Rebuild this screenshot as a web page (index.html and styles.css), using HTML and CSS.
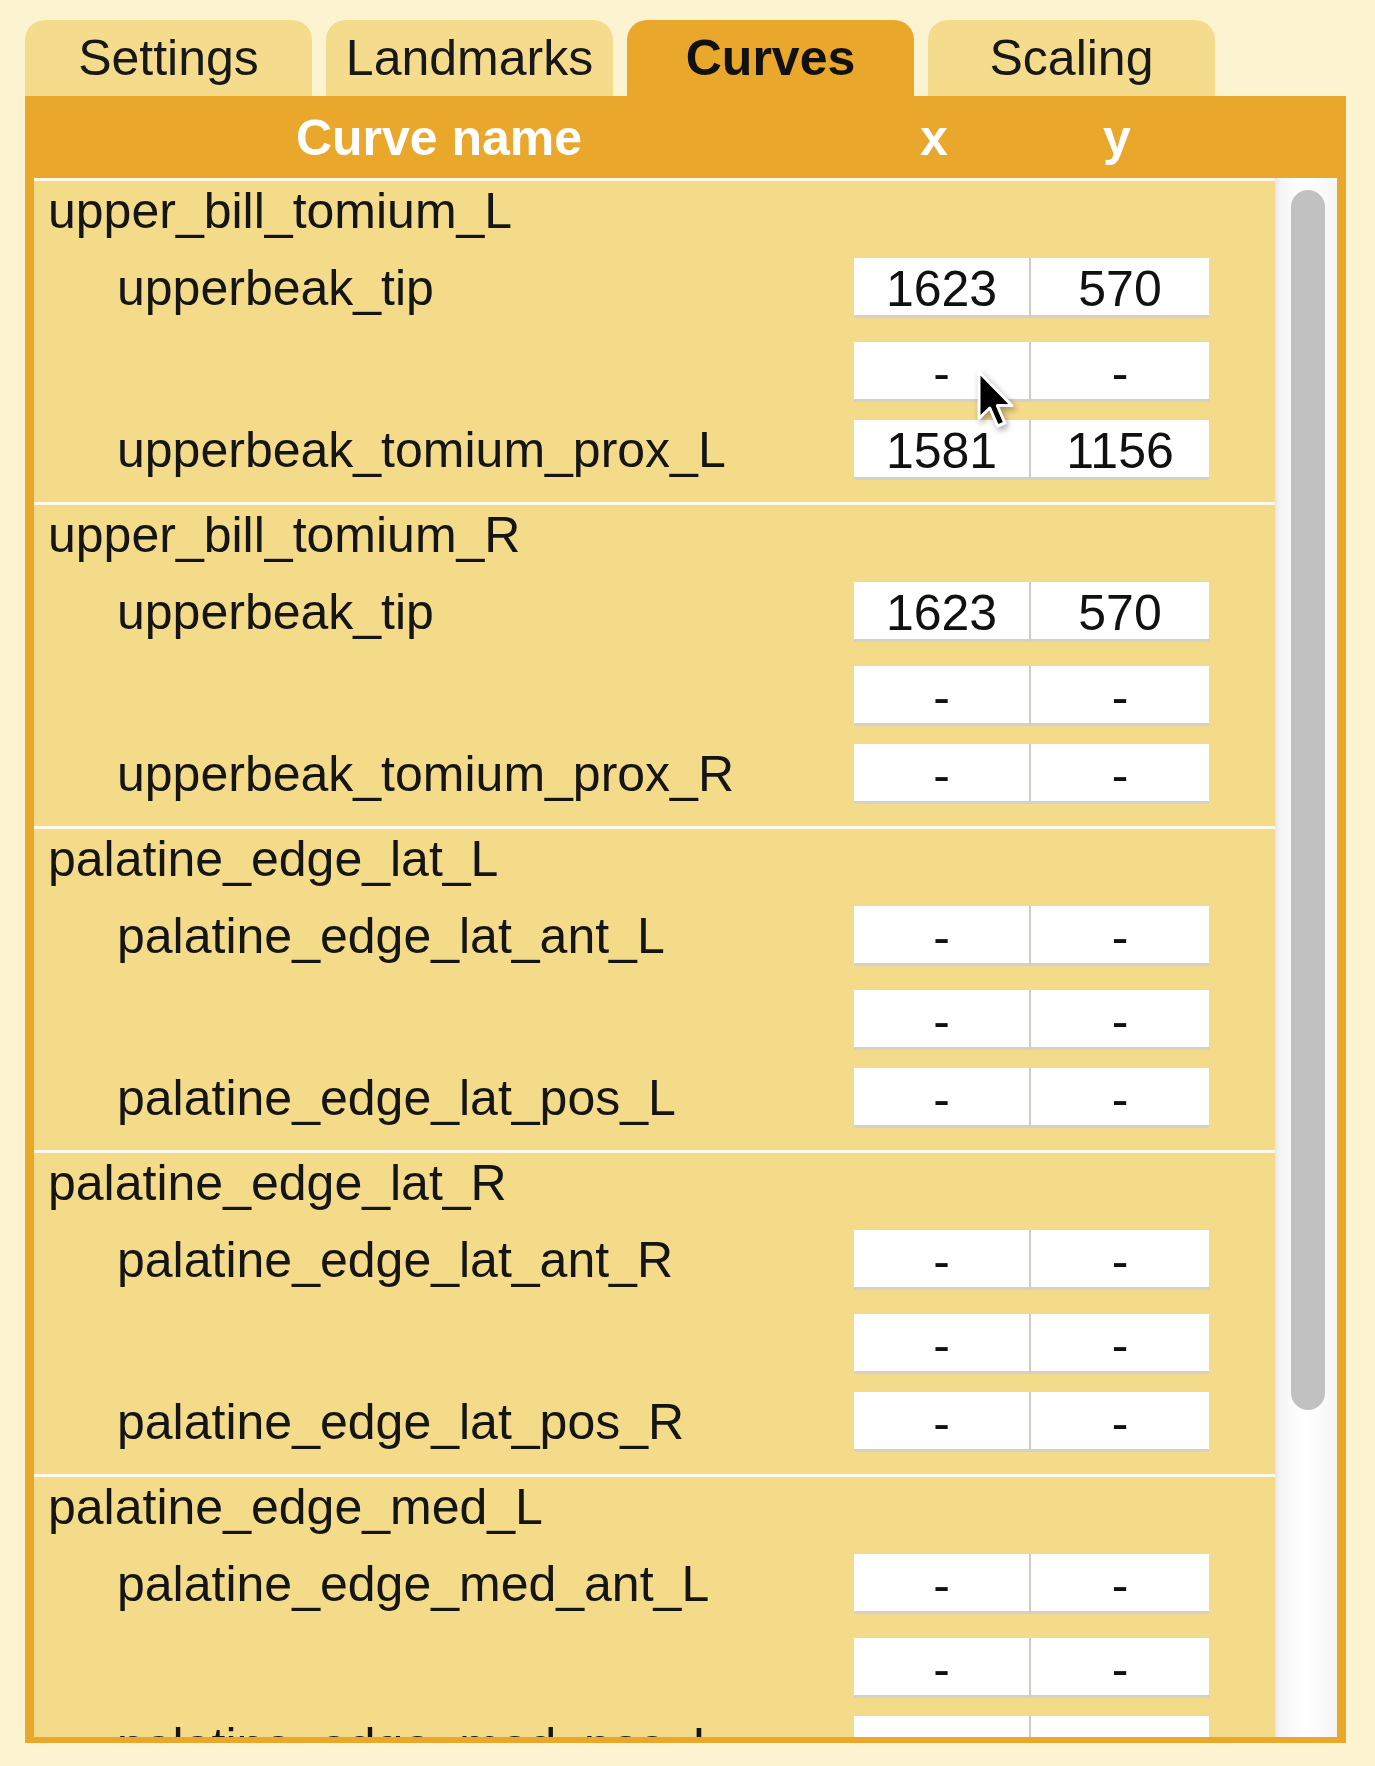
FILE: index.html
```html
<!DOCTYPE html>
<html>
<head>
<meta charset="utf-8">
<link rel="stylesheet" href="styles.css">
</head>
<body>
<div class="app">
  <nav class="tabs">
    <div class="tab">Settings</div>
    <div class="tab">Landmarks</div>
    <div class="tab active">Curves</div>
    <div class="tab">Scaling</div>
  </nav>
  <section class="panel">
    <div class="panel-head">
      <span>Curve name</span><span>x</span><span>y</span>
    </div>
    <div class="panel-body">
      <div class="list">
        <div class="group">
          <div class="group-title">upper_bill_tomium_L</div>
          <div class="row first"><span class="label">upperbeak_tip</span><span class="val x">1623</span><span class="val">570</span></div>
          <div class="row mid"><span class="label"></span><span class="val x">-</span><span class="val">-</span></div>
          <div class="row last"><span class="label">upperbeak_tomium_prox_L</span><span class="val x">1581</span><span class="val">1156</span></div>
        </div>
        <div class="group">
          <div class="group-title">upper_bill_tomium_R</div>
          <div class="row first"><span class="label">upperbeak_tip</span><span class="val x">1623</span><span class="val">570</span></div>
          <div class="row mid"><span class="label"></span><span class="val x">-</span><span class="val">-</span></div>
          <div class="row last"><span class="label">upperbeak_tomium_prox_R</span><span class="val x">-</span><span class="val">-</span></div>
        </div>
        <div class="group">
          <div class="group-title">palatine_edge_lat_L</div>
          <div class="row first"><span class="label">palatine_edge_lat_ant_L</span><span class="val x">-</span><span class="val">-</span></div>
          <div class="row mid"><span class="label"></span><span class="val x">-</span><span class="val">-</span></div>
          <div class="row last"><span class="label">palatine_edge_lat_pos_L</span><span class="val x">-</span><span class="val">-</span></div>
        </div>
        <div class="group">
          <div class="group-title">palatine_edge_lat_R</div>
          <div class="row first"><span class="label">palatine_edge_lat_ant_R</span><span class="val x">-</span><span class="val">-</span></div>
          <div class="row mid"><span class="label"></span><span class="val x">-</span><span class="val">-</span></div>
          <div class="row last"><span class="label">palatine_edge_lat_pos_R</span><span class="val x">-</span><span class="val">-</span></div>
        </div>
        <div class="group">
          <div class="group-title">palatine_edge_med_L</div>
          <div class="row first"><span class="label">palatine_edge_med_ant_L</span><span class="val x">-</span><span class="val">-</span></div>
          <div class="row mid"><span class="label"></span><span class="val x">-</span><span class="val">-</span></div>
          <div class="row last"><span class="label">palatine_edge_med_pos_L</span><span class="val x">-</span><span class="val">-</span></div>
        </div>
        <div class="group">
          <div class="group-title">palatine_edge_med_R</div>
          <div class="row first"><span class="label">palatine_edge_med_ant_R</span><span class="val x">-</span><span class="val">-</span></div>
          <div class="row mid"><span class="label"></span><span class="val x">-</span><span class="val">-</span></div>
          <div class="row last"><span class="label">palatine_edge_med_pos_R</span><span class="val x">-</span><span class="val">-</span></div>
        </div>
      </div>
      <div class="scrollbar"><div class="thumb"></div></div>
    </div>
  </section>
  <svg class="cursor" viewBox="0 0 13 21" width="39" height="63">
    <path d="M1 1 L1 16.5 L4.6 13 L7.2 19 L9.6 18 L7.1 12.2 L12 12.2 Z" fill="#000" stroke="#fff" stroke-width="1" stroke-linejoin="round"/>
  </svg>
</div>
</body>
</html>
```

FILE: styles.css
```css
html, body {
  margin: 0;
  padding: 0;
}

body {
  background: #FCF3D1;
  font-family: "Liberation Sans", Arial, sans-serif;
  font-size: 50px;
  color: #151515;
  height: 1766px;
  overflow: hidden;
}

.app {
  position: relative;
  padding: 20px 0 0 25px;
  width: 1321px;
}

.tabs {
  display: flex;
  gap: 14px;
  height: 76px;
}

.tab {
  width: 287px;
  height: 76px;
  background: #F4DC8C;
  border-radius: 20px 20px 0 0;
  text-align: center;
  line-height: 76px;
  color: #181818;
}

.tab.active {
  background: #E9A72C;
  font-weight: bold;
  color: #111;
}

.panel {
  width: 1321px;
  box-sizing: border-box;
  background: #E9A72C;
  padding: 0 9px 6px 9px;
}

.panel-head {
  display: grid;
  grid-template-columns: 810px 180px 186px;
  height: 82px;
  box-sizing: border-box;
  padding-top: 3px;
  line-height: 79px;
  color: #fff;
  font-weight: bold;
  text-align: center;
}

.panel-body {
  display: flex;
  height: 1559px;
  background: #F3DB8A;
}

.list {
  flex: 1;
  overflow: hidden;
}

.group {
  border-top: 3px solid #FFF9EC;
  padding-bottom: 22px;
}

.group-title {
  padding-left: 14px;
  height: 60px;
  line-height: 60px;
  white-space: nowrap;
}

.row {
  display: grid;
  grid-template-columns: 820px 177px 178px;
  height: 60px;
}

.row.first { margin-top: 17px; }
.row.mid { margin-top: 24px; }
.row.last { margin-top: 18px; }

.label {
  padding-left: 83px;
  line-height: 60px;
  white-space: nowrap;
}

.val {
  background: #fff;
  box-sizing: border-box;
  height: 60px;
  padding-top: 5px;
  line-height: 52px;
  border-bottom: 3px solid #D4D1C9;
  text-align: center;
  color: #111;
}

.val.x {
  border-right: 2px solid #CFCCC4;
}

.scrollbar {
  width: 62px;
  box-sizing: border-box;
  padding: 12px 12px 0 16px;
  background: linear-gradient(to right, #e6e6e6 0, #f5f5f5 5px, #ffffff 45%, #f6f6f6 100%);
}

.thumb {
  height: 1220px;
  border-radius: 17px;
  background: #C1C1C1;
}

.cursor {
  position: absolute;
  left: 976px;
  top: 369px;
  filter: drop-shadow(2px 3px 3px rgba(0,0,0,0.35));
}
```
